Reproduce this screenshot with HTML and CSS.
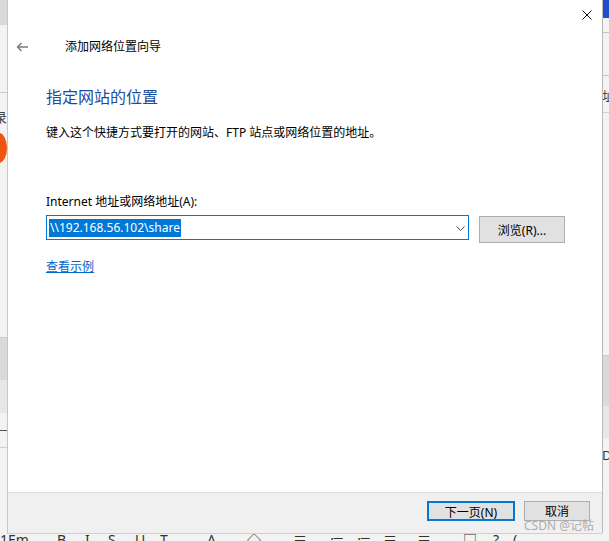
FILE: index.html
```html
<!DOCTYPE html>
<html lang="zh-CN">
<head>
    <meta charset="UTF-8">
    <title>添加网络位置向导</title>
    <link rel="stylesheet" href="styles.css">
</head>
<body>
<div class="screen">
    <div class="desk">
        <div class="edge edge-left">
            <div class="el-top"></div>
            <div class="el-row"></div>
            <div class="el-glyph">录</div>
            <div class="el-dot"></div>
            <div class="el-space"></div>
            <div class="el-band-dark"></div>
            <div class="el-band-light"></div>
            <div class="el-row2"></div>
            <div class="el-row3"></div>
        </div>

        <div class="dialog">
            <div class="titlebar">
                <svg class="close-icon" width="10" height="10" viewBox="0 0 10 10">
                    <path d="M0.5 0.5 L9.5 9.5 M9.5 0.5 L0.5 9.5" stroke="#111" stroke-width="1" fill="none"/>
                </svg>
            </div>
            <div class="nav">
                <svg class="back-icon" width="12" height="10" viewBox="0 0 12 10">
                    <path d="M12 5 H1.5 M5.5 1 L1.5 5 L5.5 9" stroke="#7a7a7a" stroke-width="1.4" fill="none"/>
                </svg>
                <span class="nav-title">添加网络位置向导</span>
            </div>

            <div class="content">
                <h1 class="instruction">指定网站的位置</h1>
                <p class="desc">键入这个快捷方式要打开的网站、FTP 站点或网络位置的地址。</p>

                <div class="field-label">Internet 地址或网络地址(A):</div>
                <div class="field-row">
                    <div class="combo">
                        <span class="combo-value">\\192.168.56.102\share</span>
                        <svg class="chevron" width="9" height="5" viewBox="0 0 9 5">
                            <path d="M0.5 0.5 L4.5 4.5 L8.5 0.5" stroke="#444" stroke-width="1" fill="none"/>
                        </svg>
                    </div>
                    <button class="btn btn-browse">浏览(R)...</button>
                </div>

                <a class="link" href="#">查看示例</a>
            </div>

            <div class="footer">
                <button class="btn btn-next">下一页(N)</button>
                <button class="btn btn-cancel">取消</button>
                <span class="watermark">CSDN @记帖</span>
            </div>
        </div>

        <div class="edge edge-right">
            <div class="er-top"></div>
            <div class="er-row"></div>
            <div class="er-row"></div>
            <div class="er-glyph">址</div>
            <div class="er-space"></div>
            <div class="er-band-dark"></div>
            <div class="er-band-light"></div>
            <div class="er-glyph2">D</div>
        </div>
    </div>

    <div class="toolbar">
        <span>1Em</span>
        <span>B</span>
        <span>I</span>
        <span>S</span>
        <span>U</span>
        <span>T</span>
        <span>A</span>
        <span>◇</span>
        <span>≡</span>
        <span>≔</span>
        <span>≔</span>
        <span>≡</span>
        <span>≡</span>
        <span>□</span>
        <span>?</span>
        <span>(</span>
    </div>
</div>
</body>
</html>
```

FILE: styles.css
```css
body {
    margin: 0;
    font-family: "Noto Sans", "Noto Sans CJK SC", sans-serif;
    font-size: 12px;
    color: #000;
}
.screen {
    width: 609px;
    height: 541px;
    overflow: hidden;
    background-color: #f3f3f3;
}
.desk {
    display: flex;
    height: 533px;
}

/* background app, left of the dialog */
.edge {
    width: 7px;
    overflow: hidden;
    background-color: #f3f3f3;
}
.el-top {
    height: 25px;
    background-color: #d9d9d9;
}
.el-row {
    height: 67px;
    border-bottom: 1px solid #c9c9c9;
}
.el-glyph {
    height: 40px;
    margin-left: -6px;
    padding-top: 16px;
    box-sizing: border-box;
    font-size: 13px;
    line-height: 16px;
    color: #444;
}
.el-dot {
    width: 16px;
    height: 30px;
    margin-left: -9px;
    border-radius: 50%;
    background-color: #ef5411;
}
.el-space {
    height: 174px;
    border-bottom: 1px solid #cfcfcf;
}
.el-band-dark {
    height: 42px;
    background-color: #dadada;
}
.el-band-light {
    height: 33px;
    background-color: #e7e7e7;
}
.el-row2 {
    height: 17px;
    border-bottom: 1px solid #555;
}
.el-row3 {
    height: 16px;
    border-bottom: 1px solid #cfcfcf;
}

/* background app, right of the dialog */
.er-top {
    height: 18px;
    background-color: #1c4fc9;
}
.er-row {
    height: 14px;
    border-bottom: 1px solid #c4c4c4;
}
.er-row + .er-row {
    height: 42px;
}
.er-glyph {
    height: 37px;
    padding-top: 13px;
    box-sizing: border-box;
    line-height: 14px;
    font-size: 13px;
    color: #444;
    border-bottom: 1px solid #d0d0d0;
}
.er-space {
    height: 242px;
    border-bottom: 1px solid #cfcfcf;
}
.er-band-dark {
    height: 50px;
    background-color: #dadada;
}
.er-band-light {
    height: 32px;
    background-color: #e7e7e7;
}
.er-glyph2 {
    padding-top: 10px;
    font-size: 13px;
    line-height: 14px;
    color: #333;
}

/* the wizard window */
.dialog {
    width: 595px;
    display: flex;
    flex-direction: column;
    position: relative;
    background-color: #fff;
    border-left: 1px solid #c6c6c6;
    box-sizing: border-box;
    box-shadow: 1px 0 0 #b9b9b9, 0 1px 0 #cfcfcf;
}
.titlebar {
    height: 30px;
    display: flex;
    justify-content: flex-end;
    padding: 10px 10px 0 0;
    box-sizing: border-box;
}
.close-icon {
    display: block;
}
.nav {
    height: 34px;
    display: flex;
    align-items: center;
    padding-left: 8px;
}
.back-icon {
    display: block;
}
.nav-title {
    margin-left: 37px;
    line-height: 16px;
}
.content {
    flex: 1;
    padding: 23px 0 0 38px;
}
.instruction {
    margin: 0;
    font-size: 16px;
    font-weight: normal;
    line-height: 20px;
    color: #1a4d9e;
}
.desc {
    margin: 18px 0 0;
    line-height: 16px;
}
.field-label {
    margin-top: 53px;
    line-height: 16px;
}
.field-row {
    display: flex;
    align-items: flex-start;
    margin-top: 5px;
}
.combo {
    width: 423px;
    height: 25px;
    box-sizing: border-box;
    border: 1px solid #0078d7;
    display: flex;
    align-items: center;
    justify-content: space-between;
    padding: 0 3px 0 2px;
}
.combo-value {
    background-color: #0078d7;
    color: #fff;
    line-height: 18px;
    padding: 0 1px;
}
.chevron {
    display: block;
    margin-top: 1px;
}
.btn {
    font-family: inherit;
    font-size: 12px;
    color: #000;
    background-color: #e1e1e1;
    border: 1px solid #adadad;
    padding: 0;
    box-sizing: border-box;
}
.btn-browse {
    width: 86px;
    height: 27px;
    margin: 1px 0 0 10px;
}
.link {
    display: inline-block;
    margin-top: 16px;
    line-height: 16px;
    color: #0066cc;
    text-decoration: underline;
}
.footer {
    height: 41px;
    display: flex;
    justify-content: flex-end;
    align-items: flex-start;
    gap: 9px;
    padding: 8px 12px 0 0;
    box-sizing: border-box;
    background-color: #f0f0f0;
    border-top: 1px solid #dcdcdc;
    position: relative;
}
.btn-next {
    width: 88px;
    height: 20px;
    border: 2px solid #0078d7;
}
.btn-cancel {
    width: 66px;
    height: 20px;
}
.watermark {
    position: absolute;
    right: 8px;
    bottom: 0;
    font-size: 12px;
    line-height: 14px;
    color: #adadad;
}

/* editor toolbar peeking out below */
.toolbar {
    height: 8px;
    overflow: hidden;
    display: grid;
    grid-template-columns: 57px 28px 23px 27px 25px 47px 40px 46px 37px 27px 26px 34px 46px 30px 20px 20px;
    font-size: 14px;
    line-height: 16px;
    color: #333;
    background-color: #f3f3f3;
}
.toolbar span {
    margin-top: -1px;
}
```
